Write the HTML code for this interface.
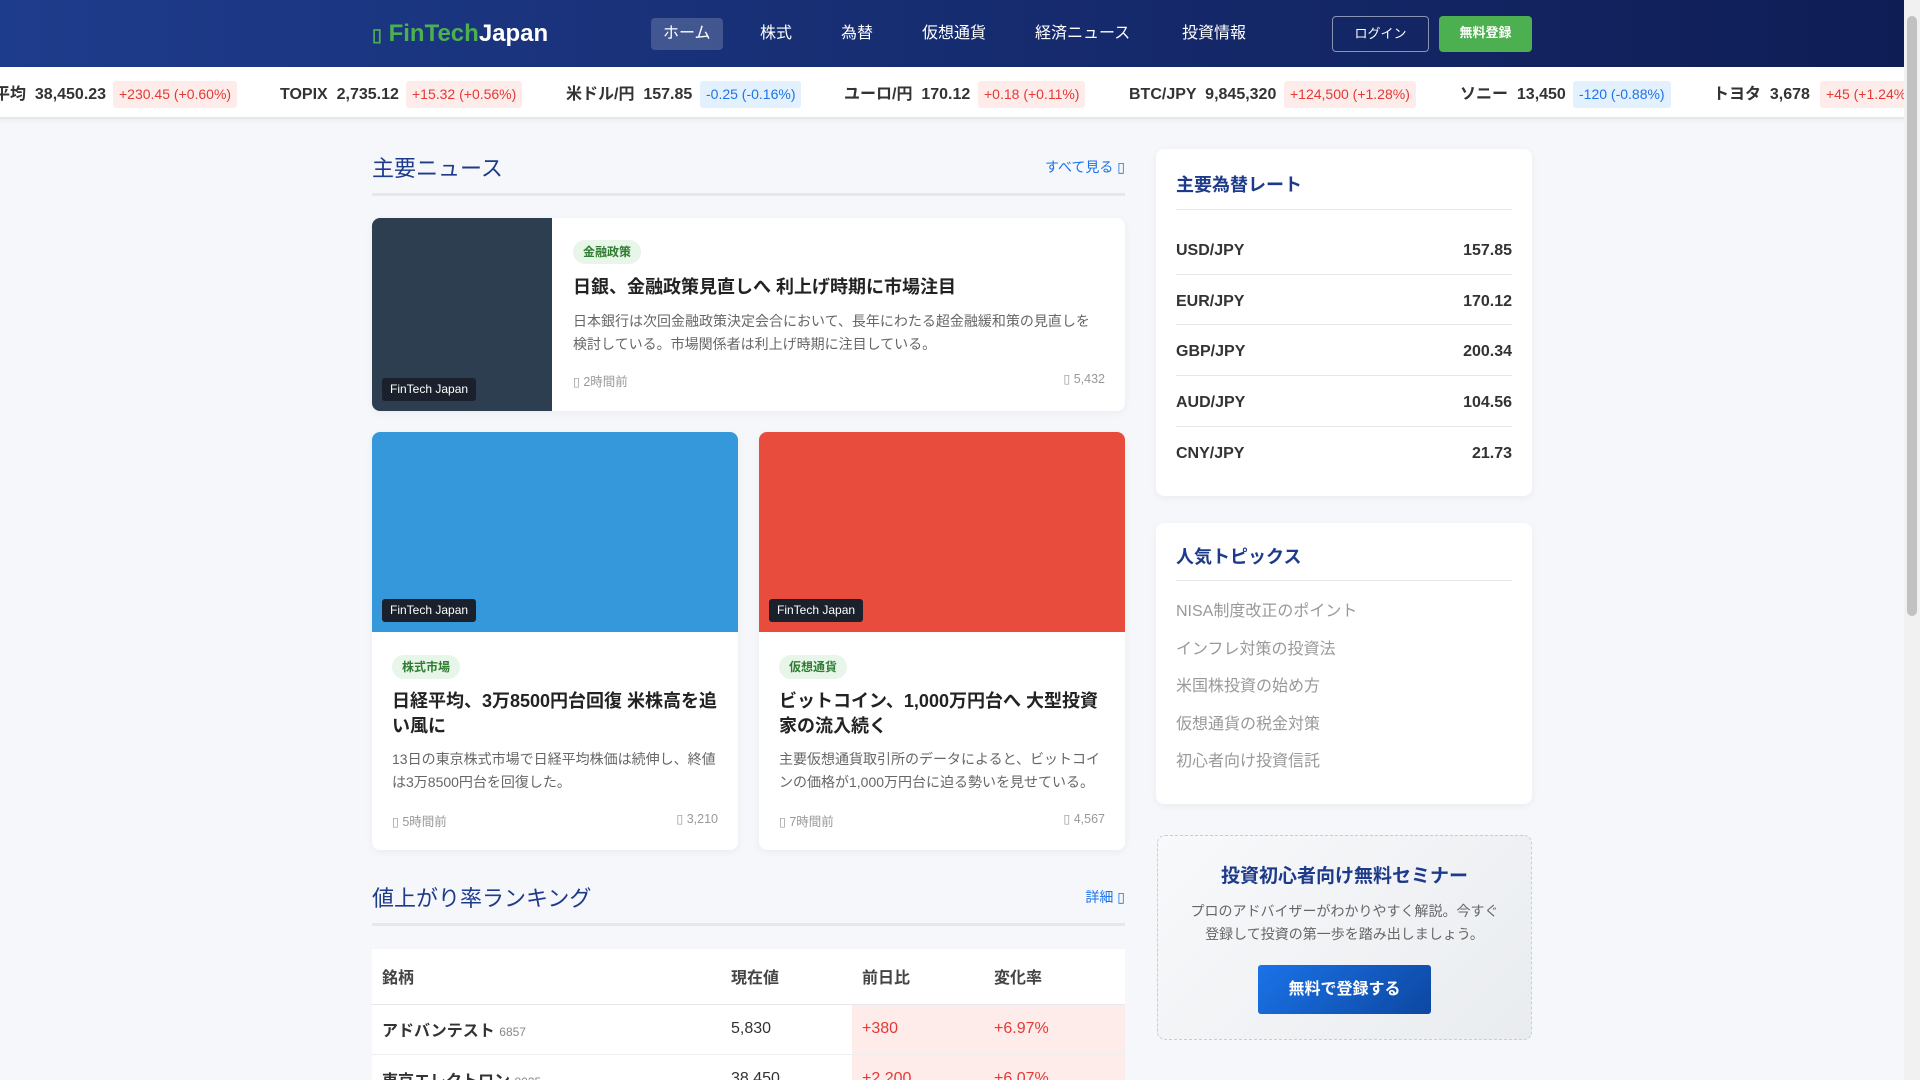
<!DOCTYPE html>
<html><head><meta charset="utf-8"><style>
*{box-sizing:border-box;margin:0;padding:0}
html,body{width:1920px;height:1080px;overflow:hidden}
body{background:#f5f7fa;font-family:"Liberation Sans","Noto Sans CJK JP",sans-serif;color:#222;position:relative}
.hdr{position:absolute;left:0;top:0;width:1904px;height:67px;background:linear-gradient(90deg,#1e3c8c,#0f1d55)}
.logo{position:absolute;left:372px;top:20px;font-size:24px;font-weight:bold;color:#fff}
.logo span{color:#4caf50}
.nav{position:absolute;top:18px;height:32px;line-height:32px;font-size:16px;color:#fff}
.home{background:rgba(255,255,255,.18);border-radius:4px;padding:0 12px}
.btn{position:absolute;top:16px;height:36px;line-height:34px;font-size:13px;text-align:center;color:#fff;border-radius:4px}
.tick{position:absolute;left:0;top:67px;width:1904px;height:52px;background:#fff;border-bottom:2px solid #e5e7eb;box-shadow:0 2px 6px rgba(0,0,0,.04);overflow:hidden;white-space:nowrap}
.ti{position:absolute;top:14px;font-size:16px;font-weight:bold;color:#333;line-height:27px}
.bd{position:absolute;top:14px;height:27px;line-height:27px;font-size:14px;padding:0 6px;border-radius:3px}
.up{background:#fdecea;color:#e53935}.dn{background:#e3f0fd;color:#1e73e8}
.sb{position:absolute;right:0;top:0;width:16px;height:1080px;background:#f1f1f1}
.sb div{position:absolute;left:3px;top:16px;width:10px;height:600px;background:#c1c1c1;border-radius:5px}
.sec{position:absolute;left:372px;width:753px;border-bottom:3px solid #e5e7eb;height:48px}
.sec h2{font-size:22px;font-weight:normal;color:#1e3a8a;position:absolute;left:0;top:3px}
.sec a{position:absolute;right:0;top:9px;font-size:14px;color:#1a73e8}
.card{position:absolute;background:#fff;border-radius:8px;box-shadow:0 2px 8px rgba(0,0,0,.05);overflow:hidden}
.lbl{position:absolute;left:10px;background:#1a202c;color:#fff;font-size:12px;padding:0 8px;height:23px;line-height:23px;border-radius:3px}
.tag{position:absolute;background:#e8f5e9;color:#2e7d32;font-size:12px;font-weight:bold;height:24px;line-height:24px;padding:0 10px;border-radius:12px}
.tt{position:absolute;font-size:18px;font-weight:bold;color:#222;line-height:25px}
.ds{position:absolute;font-size:14px;color:#666;line-height:23px}
.mt{position:absolute;font-size:12.5px;color:#999}
table{position:absolute;left:372px;top:949px;width:753px;border-collapse:collapse;background:#fff;font-size:16px}
th{height:55px;text-align:left;font-weight:bold;color:#444;padding-left:10px;border-bottom:1px solid #e5e7eb}
td{height:50px;padding-left:10px;border-bottom:1px solid #eee;color:#333}
td.r{background:#fdecea;color:#e53935}
.side h3{position:absolute;left:20px;font-size:18px;color:#1e3a8a;font-weight:bold}
.hr{position:absolute;left:20px;right:20px;height:1px;background:#e5e7eb}
.fx{position:absolute;left:20px;right:20px;font-size:16px;font-weight:bold;color:#333}
.fx b{float:right}
.tp{position:absolute;left:20px;font-size:16px;color:#999}
</style></head><body>
<div class="hdr">
<div class="logo"><span style="font-size:18px">▯</span> <span>FinTech</span>Japan</div>
<div class="nav home" style="left:651px">ホーム</div>
<div class="nav" style="left:760px">株式</div>
<div class="nav" style="left:841px">為替</div>
<div class="nav" style="left:922px">仮想通貨</div>
<div class="nav" style="left:1035px">経済ニュース</div>
<div class="nav" style="left:1182px">投資情報</div>
<div class="btn" style="left:1332px;width:97px;border:1px solid rgba(255,255,255,.5)">ログイン</div>
<div class="btn" style="left:1439px;width:93px;background:#4caf50;font-weight:bold">無料登録</div>
</div>
<div class="tick">
<div class="ti" style="left:-6px">平均 &nbsp;38,450.23</div><div class="bd up" style="left:113px">+230.45 (+0.60%)</div>
<div class="ti" style="left:280px">TOPIX &nbsp;2,735.12</div><div class="bd up" style="left:406px">+15.32 (+0.56%)</div>
<div class="ti" style="left:566px">米ドル/円 &nbsp;157.85</div><div class="bd dn" style="left:700px">-0.25 (-0.16%)</div>
<div class="ti" style="left:844px">ユーロ/円 &nbsp;170.12</div><div class="bd up" style="left:978px">+0.18 (+0.11%)</div>
<div class="ti" style="left:1129px">BTC/JPY &nbsp;9,845,320</div><div class="bd up" style="left:1284px">+124,500 (+1.28%)</div>
<div class="ti" style="left:1460px">ソニー &nbsp;13,450</div><div class="bd dn" style="left:1573px">-120 (-0.88%)</div>
<div class="ti" style="left:1713px">トヨタ &nbsp;3,678</div><div class="bd up" style="left:1820px">+45 (+1.24%)</div>
</div>

<div class="sec" style="top:148px"><h2>主要ニュース</h2><a>すべて見る ▯</a></div>
<div class="card" style="left:372px;top:218px;width:753px;height:193px">
<div style="position:absolute;left:0;top:0;width:180px;height:193px;background:#2c3e50"></div>
<div class="lbl" style="top:160px">FinTech Japan</div>
<div class="tag" style="left:201px;top:22px">金融政策</div>
<div class="tt" style="left:201px;top:57px">日銀、金融政策見直しへ 利上げ時期に市場注目</div>
<div class="ds" style="left:201px;top:92px;width:525px">日本銀行は次回金融政策決定会合において、長年にわたる超金融緩和策の見直しを検討している。市場関係者は利上げ時期に注目している。</div>
<div class="mt" style="left:201px;top:153px">▯ 2時間前</div><div class="mt" style="right:20px;top:153px">▯ 5,432</div>
</div>

<div class="card" style="left:372px;top:432px;width:366px;height:418px">
<div style="position:absolute;left:0;top:0;width:366px;height:200px;background:#3498db"></div>
<div class="lbl" style="top:167px">FinTech Japan</div>
<div class="tag" style="left:20px;top:223px">株式市場</div>
<div class="tt" style="left:20px;top:257px;width:330px">日経平均、3万8500円台回復 米株高を追い風に</div>
<div class="ds" style="left:20px;top:316px;width:330px">13日の東京株式市場で日経平均株価は続伸し、終値は3万8500円台を回復した。</div>
<div class="mt" style="left:20px;top:379px">▯ 5時間前</div><div class="mt" style="right:20px;top:379px">▯ 3,210</div>
</div>
<div class="card" style="left:759px;top:432px;width:366px;height:418px">
<div style="position:absolute;left:0;top:0;width:366px;height:200px;background:#e74c3c"></div>
<div class="lbl" style="top:167px">FinTech Japan</div>
<div class="tag" style="left:20px;top:223px">仮想通貨</div>
<div class="tt" style="left:20px;top:257px;width:330px">ビットコイン、1,000万円台へ 大型投資家の流入続く</div>
<div class="ds" style="left:20px;top:316px;width:330px">主要仮想通貨取引所のデータによると、ビットコインの価格が1,000万円台に迫る勢いを見せている。</div>
<div class="mt" style="left:20px;top:379px">▯ 7時間前</div><div class="mt" style="right:20px;top:379px">▯ 4,567</div>
</div>

<div class="sec" style="top:878px"><h2>値上がり率ランキング</h2><a>詳細 ▯</a></div>
<table>
<tr><th style="width:349px">銘柄</th><th style="width:131px">現在値</th><th style="width:132px">前日比</th><th>変化率</th></tr>
<tr><td><b>アドバンテスト</b> <span style="font-size:12px;color:#888">6857</span></td><td>5,830</td><td class="r">+380</td><td class="r">+6.97%</td></tr>
<tr><td><b>東京エレクトロン</b> <span style="font-size:12px;color:#888">8035</span></td><td>38,450</td><td class="r">+2,200</td><td class="r">+6.07%</td></tr>
</table>

<div class="card side" style="left:1156px;top:149px;width:376px;height:347px">
<h3 style="top:22px">主要為替レート</h3><div class="hr" style="top:60px"></div>
<div class="fx" style="top:93px">USD/JPY<b>157.85</b></div><div class="hr" style="top:125px"></div>
<div class="fx" style="top:144px">EUR/JPY<b>170.12</b></div><div class="hr" style="top:175px"></div>
<div class="fx" style="top:194px">GBP/JPY<b>200.34</b></div><div class="hr" style="top:226px"></div>
<div class="fx" style="top:245px">AUD/JPY<b>104.56</b></div><div class="hr" style="top:277px"></div>
<div class="fx" style="top:296px">CNY/JPY<b>21.73</b></div>
</div>
<div class="card side" style="left:1156px;top:523px;width:376px;height:281px">
<h3 style="top:20px">人気トピックス</h3><div class="hr" style="top:57px"></div>
<div class="tp" style="top:74px">NISA制度改正のポイント</div>
<div class="tp" style="top:112px">インフレ対策の投資法</div>
<div class="tp" style="top:149px">米国株投資の始め方</div>
<div class="tp" style="top:187px">仮想通貨の税金対策</div>
<div class="tp" style="top:224px">初心者向け投資信託</div>
</div>
<div style="position:absolute;left:1157px;top:835px;width:375px;height:205px;border:1px dashed #ccc;border-radius:8px;background:linear-gradient(135deg,#f8f9fb,#e9ecef);text-align:center">
<div style="margin-top:25px;font-size:19px;font-weight:bold;color:#1e3a8a">投資初心者向け無料セミナー</div>
<div style="margin-top:12px;font-size:14px;color:#666;line-height:23px">プロのアドバイザーがわかりやすく解説。今すぐ<br>登録して投資の第一歩を踏み出しましょう。</div>
<div style="margin:19px auto 0;width:173px;height:49px;line-height:49px;background:linear-gradient(135deg,#1a73e8,#0d47a1);color:#fff;font-size:16px;font-weight:bold;border-radius:3px">無料で登録する</div>
</div>
<div class="sb"><div></div></div>
</body></html>
